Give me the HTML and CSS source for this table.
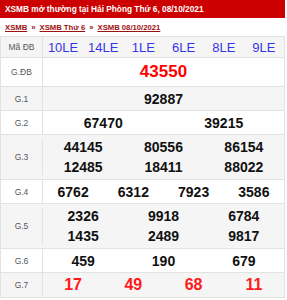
FILE: index.html
```html
<!DOCTYPE html>
<html lang="vi">
<head>
<meta charset="utf-8">
<link rel="stylesheet" href="styles.css">
</head>
<body>
<div class="box">
  <h1 class="title">XSMB mở thường tại Hải Phòng Thứ 6, 08/10/2021</h1>
  <div class="crumbs">
    <a href="#">XSMB</a><span class="sep">»</span><a href="#">XSMB Thứ 6</a><span class="sep">»</span><a href="#">XSMB 08/10/2021</a>
  </div>
  <div class="table">
    <div class="row gray r-code">
      <div class="label">Mã ĐB</div>
      <div class="cells c6 codes"><span>10LE</span><span>14LE</span><span>1LE</span><span>6LE</span><span>8LE</span><span>9LE</span></div>
    </div>
    <div class="row r-db">
      <div class="label">G.ĐB</div>
      <div class="cells c1"><span class="special">43550</span></div>
    </div>
    <div class="row gray r-n">
      <div class="label">G.1</div>
      <div class="cells c1"><span>92887</span></div>
    </div>
    <div class="row r-n">
      <div class="label">G.2</div>
      <div class="cells c2"><span>67470</span><span>39215</span></div>
    </div>
    <div class="row gray r-2">
      <div class="label">G.3</div>
      <div class="cells c3"><span>44145</span><span>80556</span><span>86154</span><span>12485</span><span>18411</span><span>88022</span></div>
    </div>
    <div class="row r-n">
      <div class="label">G.4</div>
      <div class="cells c4"><span>6762</span><span>6312</span><span>7923</span><span>3586</span></div>
    </div>
    <div class="row gray r-2">
      <div class="label">G.5</div>
      <div class="cells c3"><span>2326</span><span>9918</span><span>6784</span><span>1435</span><span>2489</span><span>9817</span></div>
    </div>
    <div class="row r-n">
      <div class="label">G.6</div>
      <div class="cells c3"><span>459</span><span>190</span><span>679</span></div>
    </div>
    <div class="row gray r-7">
      <div class="label">G.7</div>
      <div class="cells c4 red"><span>17</span><span>49</span><span>68</span><span>11</span></div>
    </div>
  </div>
</div>
</body>
</html>
```

FILE: styles.css
```css
html, body {
  margin: 0;
  padding: 0;
  background: #fff;
  font-family: "Liberation Sans", Arial, sans-serif;
}
.box {
  width: 285px;
}
.title {
  margin: 0;
  height: 18px;
  line-height: 18px;
  background: #cc0000;
  color: #fff;
  font-size: 8.3px;
  font-weight: bold;
  padding-left: 5px;
  white-space: nowrap;
}
.crumbs {
  height: 18px;
  line-height: 19px;
  padding-left: 5px;
  font-size: 7.7px;
  font-weight: bold;
  border-bottom: 1px solid #e2e2e2;
}
.crumbs a {
  color: #9b1010;
  text-decoration: underline;
}
.crumbs .sep {
  color: #9b1010;
  margin: 0 4px;
}
.table {
  border-left: 1px solid #e2e2e2;
  border-right: 1px solid #e2e2e2;
}
.row {
  display: grid;
  grid-template-columns: 42px 1fr;
  border-bottom: 1px solid #e2e2e2;
}
.row.gray {
  background: #f5f5f5;
}
.label {
  border-right: 1px solid #e2e2e2;
  display: flex;
  align-items: center;
  justify-content: center;
  font-size: 8.5px;
  color: #555;
}
.cells {
  display: grid;
  align-items: center;
  justify-items: center;
  font-size: 14px;
  font-weight: bold;
  color: #111;
}
.c1 { grid-template-columns: 1fr; }
.c2 { grid-template-columns: repeat(2, 1fr); }
.c3 { grid-template-columns: repeat(3, 1fr); }
.c4 { grid-template-columns: repeat(4, 1fr); }
.c6 { grid-template-columns: repeat(6, 1fr); }
.r-code { height: 20px; }
.r-db { height: 28px; }
.r-n { height: 23px; }
.r-2 { height: 44px; align-content: center; }
.r-2 .cells { row-gap: 4px; align-content: center; }
.r-7 { height: 24px; }
.codes {
  font-size: 13px;
  font-weight: normal;
  color: #3535e8;
}
.special {
  font-size: 17px;
  color: #ff0000;
}
.red {
  font-size: 16px;
  color: #ff1a1a;
}
```
